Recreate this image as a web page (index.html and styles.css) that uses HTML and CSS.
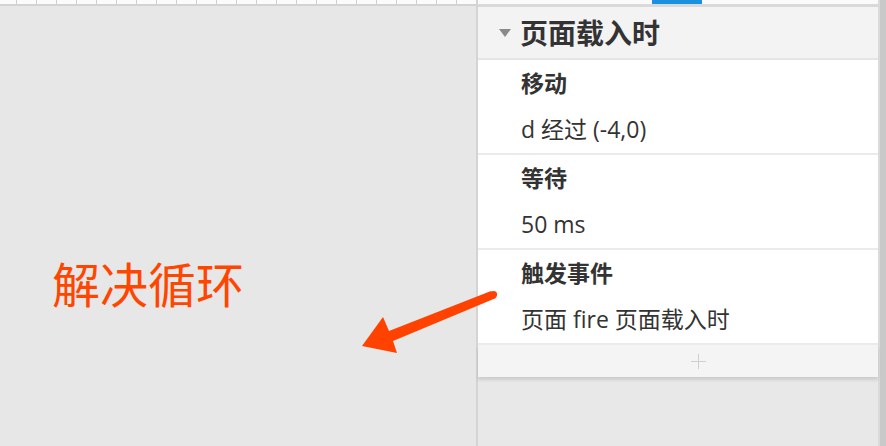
FILE: index.html
```html
<!DOCTYPE html>
<html lang="zh-CN">
<head>
<meta charset="utf-8">
<title>页面载入时</title>
<link rel="stylesheet" href="styles.css">
</head>
<body>
<div class="app">
  <div class="canvas">
    <div class="ruler"></div>
    <div class="canvas-body"></div>
  </div>
  <div class="inspector">
    <div class="tabs"><span class="tab-active"></span></div>
    <div class="event-head">
      <span class="caret"></span>
      <span class="event-name">页面载入时</span>
    </div>
    <div class="actions">
      <div class="action">
        <div class="action-title">移动</div>
        <div class="action-value">d 经过 (-4,0)</div>
      </div>
      <div class="action">
        <div class="action-title">等待</div>
        <div class="action-value">50 ms</div>
      </div>
      <div class="action">
        <div class="action-title">触发事件</div>
        <div class="action-value">页面 fire 页面载入时</div>
      </div>
    </div>
    <div class="add-row"><span class="plus"></span></div>
    <div class="rest"></div>
  </div>
  <div class="scrollbar"></div>

  <div class="note">解决循环</div>
  <svg class="arrow" width="886" height="446" viewBox="0 0 886 446">
    <polygon points="362,346 383,317 389,331 491,291 496,298 393,341 397,353" fill="#ff4200"/>
    <circle cx="493.5" cy="294.5" r="3.6" fill="#ff4200"/>
  </svg>
</div>
</body>
</html>
```

FILE: styles.css
```css
* { box-sizing: border-box; }
html, body { margin: 0; padding: 0; }
body {
  font-family: "Open Sans", "Noto Sans CJK SC", sans-serif;
  color: #333;
  background: #e7e7e7;
}
.app {
  position: relative;
  width: 886px;
  height: 446px;
  display: flex;
  overflow: hidden;
}
.canvas {
  width: 478px;
  flex: none;
  display: flex;
  flex-direction: column;
  border-right: 2px solid #d4d4d4;
}
.ruler {
  height: 6px;
  flex: none;
  border-bottom: 2px solid #d3d3d3;
  background-color: #fbfbfb;
  background-image: repeating-linear-gradient(to right, transparent 0, transparent 16px, #cfcfcf 16px, #cfcfcf 17px, transparent 17px, transparent 20px);
}
.canvas-body {
  flex: 1;
  background: #e7e7e7;
}
.inspector {
  width: 402px;
  flex: none;
  display: flex;
  flex-direction: column;
  border-right: 2px solid #dadada;
}
.tabs {
  height: 7px;
  flex: none;
  background: #fafafa;
  border-bottom: 3px solid #d9d9d9;
  padding-left: 174px;
}
.tab-active {
  display: block;
  width: 50px;
  height: 4px;
  background: #1b8fe0;
}
.event-head {
  height: 53px;
  flex: none;
  background: #f3f3f3;
  border-bottom: 2px solid #e5e5e5;
  display: flex;
  align-items: center;
  padding-left: 21px;
  gap: 9px;
}
.caret {
  width: 0;
  height: 0;
  border-left: 6px solid transparent;
  border-right: 6px solid transparent;
  border-top: 8px solid #8a8a8a;
  margin-top: 1px;
}
.event-name {
  font-size: 28px;
  font-weight: 700;
  color: #333;
  line-height: 1;
}
.actions {
  background: #fff;
  flex: none;
}
.action {
  height: 95px;
  border-bottom: 2px solid #ebebeb;
  padding-left: 43px;
}
.action-title {
  height: 46px;
  line-height: 46px;
  font-size: 23px;
  font-weight: 700;
}
.action-value {
  height: 47px;
  line-height: 47px;
  font-size: 23px;
}
.add-row {
  height: 32px;
  flex: none;
  background: #f4f4f4;
  display: flex;
  align-items: center;
  justify-content: center;
  padding-left: 40px;
  box-shadow: 0 3px 3px rgba(0,0,0,0.12);
  position: relative;
  z-index: 1;
}
.plus {
  position: relative;
  width: 15px;
  height: 15px;
}
.plus::before, .plus::after {
  content: "";
  position: absolute;
  background: #cfcfcf;
}
.plus::before { left: 7px; top: 0; width: 1.5px; height: 15px; }
.plus::after { top: 7px; left: 0; height: 1.5px; width: 15px; }
.rest {
  flex: 1;
  background: #e8e8e8;
}
.scrollbar {
  flex: 1;
  background: #c9c9c9;
}
.note {
  position: absolute;
  left: 52px;
  top: 255px;
  font-family: "Noto Sans CJK SC", sans-serif;
  font-size: 48px;
  font-weight: 400;
  line-height: 1.15;
  color: #ff4600;
}
.arrow {
  position: absolute;
  left: 0;
  top: 0;
  pointer-events: none;
}
```
